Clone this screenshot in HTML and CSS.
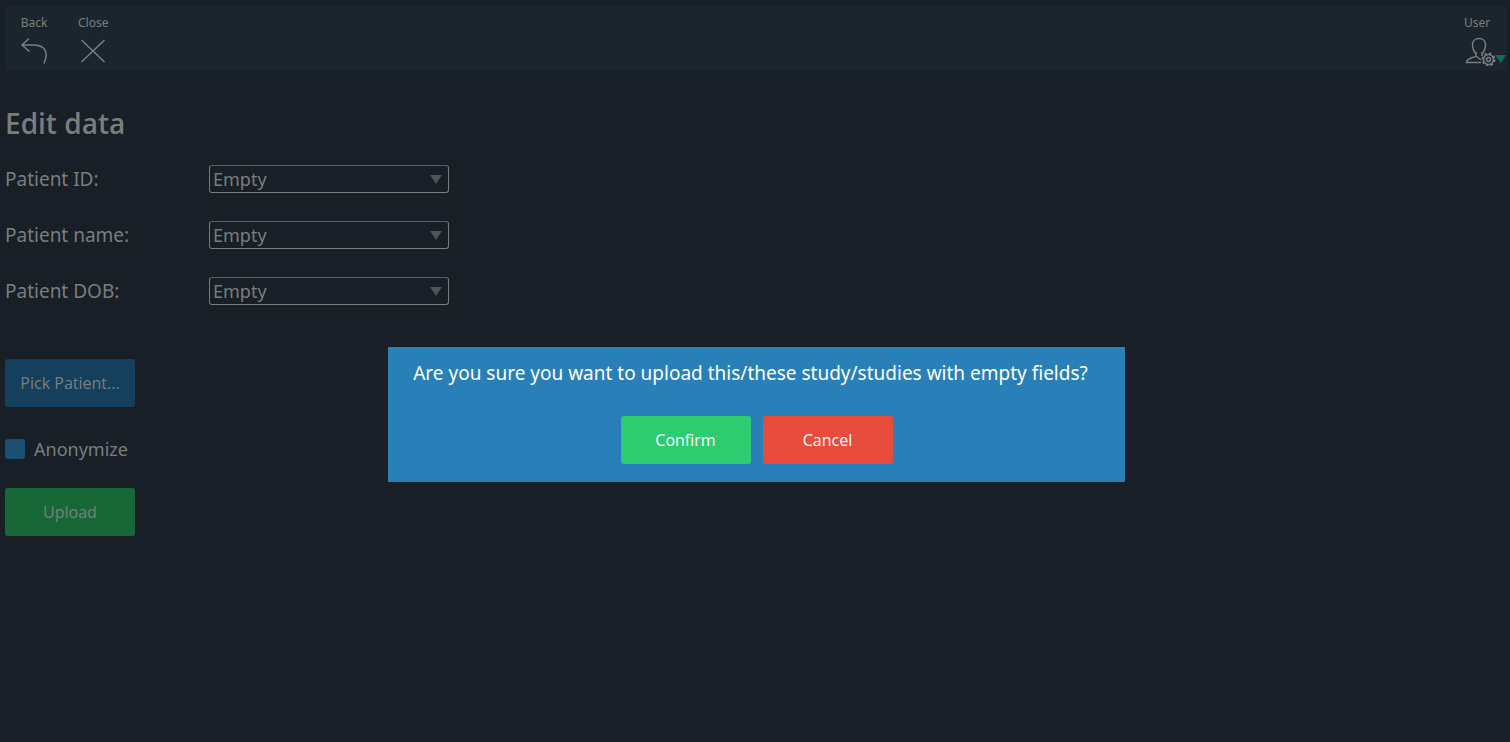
FILE: index.html
```html
<!DOCTYPE html>
<html lang="en">
<head>
<meta charset="utf-8">
<title>Edit data</title>
<link rel="stylesheet" href="styles.css">
</head>
<body>
<header class="toolbar">
  <nav class="toolbar-group">
    <button class="tool" type="button">
      <span>Back</span>
      <svg class="tool-icon" viewBox="0 0 30 30"><path d="M10 2.500 L3 9 L10.500 15.500 M3 9 H14 C26 9 30 16 25 27.500"/></svg>
    </button>
    <button class="tool" type="button">
      <span>Close</span>
      <svg class="tool-icon" viewBox="0 0 30 30"><path d="M3.500 4 L26.500 26 M26.500 4 L3.500 26"/></svg>
    </button>
  </nav>
  <button class="tool tool-user" type="button">
    <span>User</span>
    <svg class="user-icon" viewBox="0 0 42 30">
      <path d="M12 18 C9.500 15 8.500 12 8.500 8.500 C8.500 5 11 2.500 15 2.500 C19 2.500 21.500 5 21.500 8.500 C21.500 12 20.500 15 18 18 M12 16 V20 C11 22 3 21 2.500 26.500 H17 M18 16 V20 M12 20 L17 24"/>
      <circle cx="24.500" cy="23.500" r="5"/>
      <circle cx="24.500" cy="23.500" r="6" stroke-width="2" stroke-dasharray="2.350 2.350"/>
      <circle cx="24.500" cy="23.500" r="2"/>
      <path class="caret" d="M31 19 H42 L36.500 27 Z"/>
    </svg>
  </button>
</header>
<main class="page">
  <h1 class="title">Edit data</h1>
  <form class="form">
    <div class="field">
      <label for="pid">Patient ID:</label>
      <div class="picker"><select id="pid"><option>Empty</option></select></div>
    </div>
    <div class="field">
      <label for="pname">Patient name:</label>
      <div class="picker"><select id="pname"><option>Empty</option></select></div>
    </div>
    <div class="field">
      <label for="pdob">Patient DOB:</label>
      <div class="picker"><select id="pdob"><option>Empty</option></select></div>
    </div>
    <button class="btn btn-pick" type="button">Pick Patient...</button>
    <label class="check"><input type="checkbox">Anonymize</label>
    <button class="btn btn-upload" type="button">Upload</button>
  </form>
</main>
<div class="overlay">
  <section class="dialog" role="dialog" aria-modal="true" aria-labelledby="question">
    <p class="question" id="question">Are you sure you want to upload this/these study/studies with empty fields?</p>
    <div class="actions">
      <button class="btn btn-confirm" type="button">Confirm</button>
      <button class="btn btn-cancel" type="button">Cancel</button>
    </div>
  </section>
</div>
</body>
</html>
```
FILE: styles.css
```css
* {
  box-sizing: border-box;
}

body {
  margin: 0;
  padding: 6px 3px 0 5px;
  background: #181f27;
  color: #7b7d7d;
  font-family: "Noto Sans", "Open Sans", sans-serif;
  font-size: 18px;
}

button,
select {
  font: inherit;
  color: inherit;
}

.toolbar {
  display: flex;
  justify-content: space-between;
  height: 65px;
  padding: 8px 1px 0 14px;
  background: #1b252e;
}

.toolbar-group {
  display: flex;
  gap: 29px;
}

.tool {
  display: flex;
  flex-direction: column;
  align-items: center;
  gap: 4px;
  padding: 0;
  border: 0;
  background: none;
  font-size: 12px;
  line-height: 18px;
}

.tool-user {
  align-items: flex-start;
}

.tool-icon,
.user-icon {
  height: 30px;
  fill: none;
  stroke: #7b7d7d;
  stroke-width: 1.5;
}

.tool-icon {
  width: 30px;
}

.user-icon {
  width: 42px;
}

.user-icon .caret {
  fill: #0e6e5a;
  stroke: none;
}

.title {
  margin: 0;
  padding-top: 30px;
  font-family: "Open Sans", sans-serif;
  font-size: 28px;
  font-weight: 600;
  line-height: 44px;
}

.form {
  display: flex;
  flex-direction: column;
  align-items: flex-start;
  padding-top: 20px;
}

.field {
  display: flex;
  align-items: center;
  height: 28px;
  margin-bottom: 28px;
}

.field label {
  width: 204px;
  font-size: 19px;
}

.picker {
  position: relative;
}

.picker::after {
  content: "";
  position: absolute;
  top: 10px;
  right: 7px;
  border: 6px solid transparent;
  border-top: 9px solid #4d5555;
  border-bottom: 0;
  pointer-events: none;
}

.picker select {
  display: block;
  width: 240px;
  height: 28px;
  padding: 0 3px;
  border: 1px solid #7b7d7b;
  border-top-color: #5a5f60;
  border-radius: 3px;
  background: transparent;
  appearance: none;
}

.btn {
  width: 130px;
  height: 48px;
  padding: 0;
  border: 0;
  border-radius: 3px;
  font-family: "Open Sans", sans-serif;
  font-size: 16px;
}

.btn-pick {
  margin-top: 26px;
  background: #15405d;
}

.check {
  display: flex;
  align-items: center;
  gap: 9px;
  height: 28px;
  margin: 28px 0 25px;
}

.check input {
  width: 20px;
  height: 20px;
  margin: 0;
  border-radius: 3px;
  background: #1b4f73;
  appearance: none;
}

.btn-upload {
  background: #186837;
}

.overlay {
  position: fixed;
  inset: 0;
  display: flex;
  align-items: center;
  justify-content: center;
  padding: 87px 0 0 3px;
}

.dialog {
  padding: 12px 25px 18px;
  border-radius: 1px;
  background: #2980b9;
  color: #fff;
}

.question {
  margin: 0 12px 29px 0;
  font-size: 19px;
  line-height: 28px;
}

.actions {
  display: flex;
  justify-content: center;
  gap: 12px;
}

.btn-confirm {
  background: #2ecc71;
}

.btn-cancel {
  background: #e74c3c;
}
```
